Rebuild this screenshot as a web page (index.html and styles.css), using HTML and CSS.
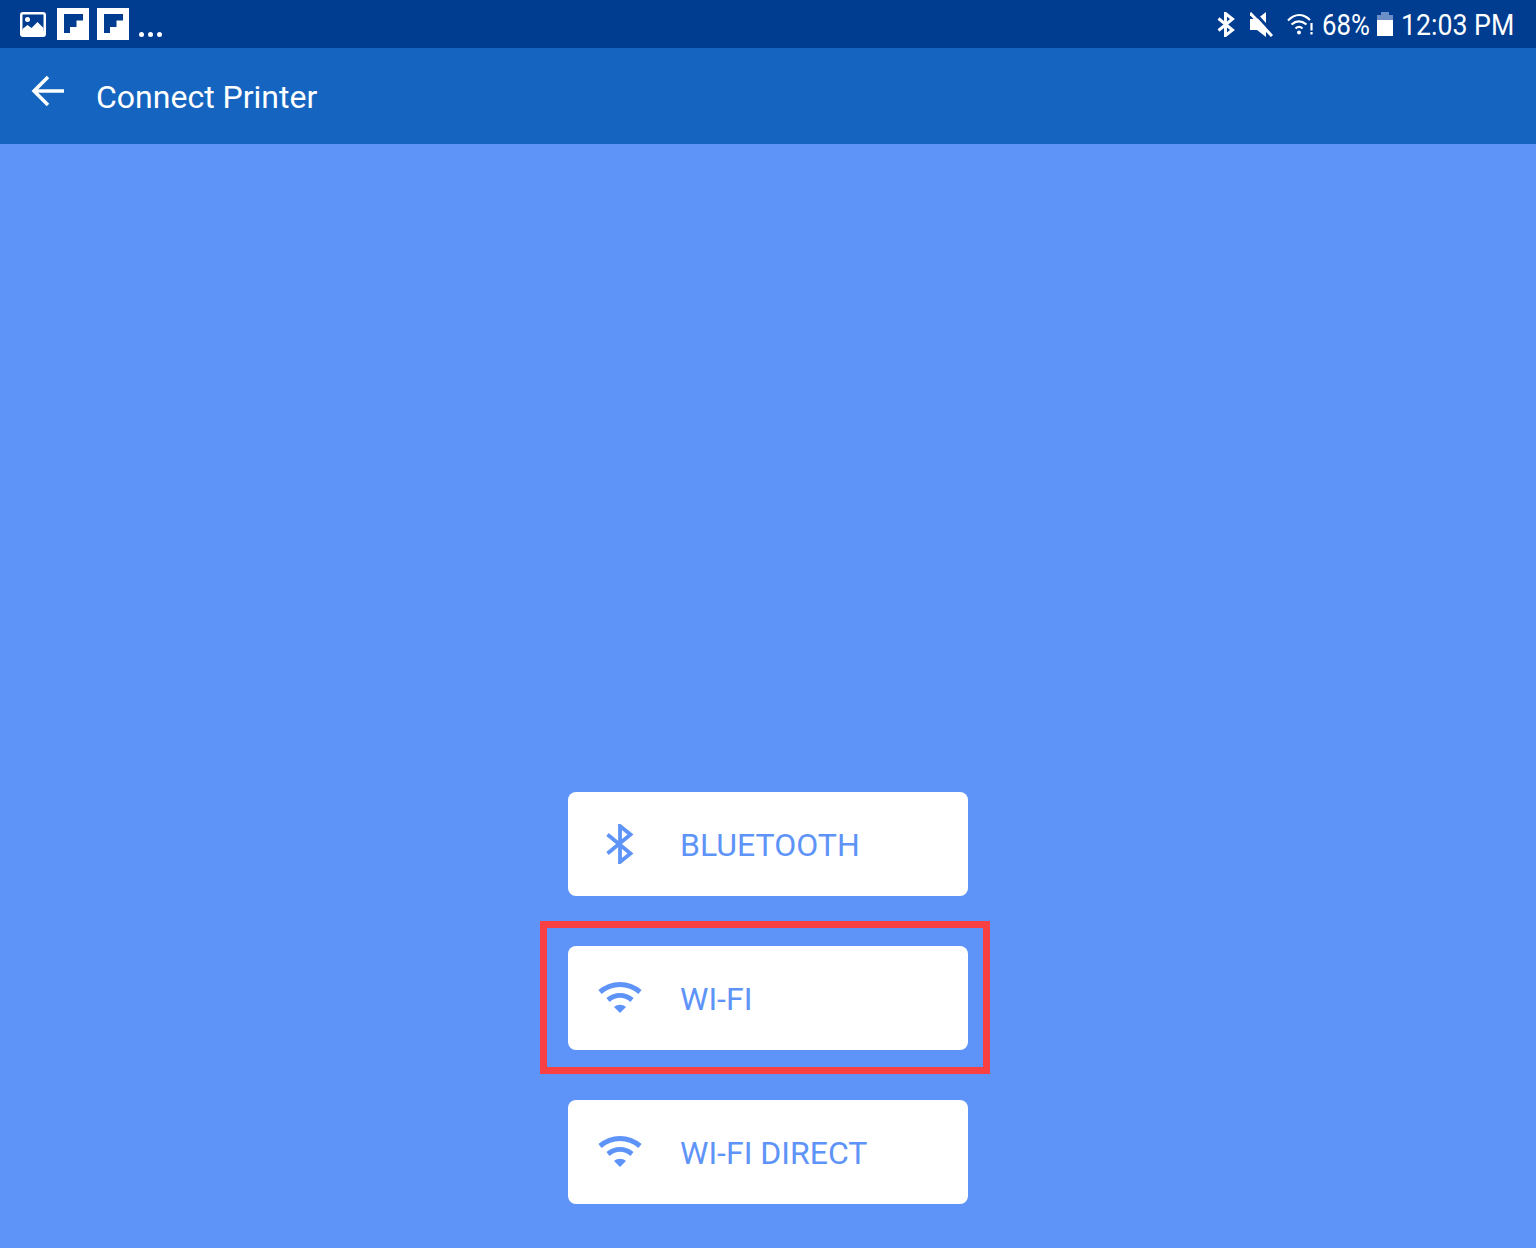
FILE: index.html
```html
<!DOCTYPE html>
<html lang="en">
<head>
    <meta charset="UTF-8">
    <meta name="viewport" content="width=device-width, initial-scale=1.0">
    <title>Connect Printer</title>
    <link rel="stylesheet" href="styles.css">
</head>
<body>
    <div class="status-bar">
        <div class="status-left">
            <svg class="icon-photo" width="26" height="25" viewBox="0 0 26 25"><rect width="26" height="25" rx="3" fill="#fff"/><rect x="2.500" y="2.500" width="21" height="16" fill="#003c8f"/><path d="M2.500 19v-2l5-4 4 3 6-6 6 6v3z" fill="#fff"/><circle cx="7.500" cy="7.500" r="2.500" fill="#fff"/></svg>
            <svg class="icon-app" width="32" height="32" viewBox="0 0 32 32"><rect width="32" height="32" fill="#fff"/><path d="M7 6h19v6.500h-6.500V19H13v6H7z" fill="#003c8f"/></svg>
            <svg class="icon-app" width="32" height="32" viewBox="0 0 32 32"><rect width="32" height="32" fill="#fff"/><path d="M7 6h19v6.500h-6.500V19H13v6H7z" fill="#003c8f"/></svg>
            <div class="dots"><span></span><span></span><span></span></div>
        </div>
        <div class="status-right">
            <svg class="icon-bt" width="18" height="25" viewBox="0 0 18 25" fill="none" stroke="#fff" stroke-width="3"><path d="M1.500 6.500l14 11.500L8.500 23.500V1.500L15.500 7 1.500 18.500"/></svg>
            <svg class="icon-mute" width="23" height="25" viewBox="0 0 23 25"><path d="M0 7h7l9-7v25l-9-7H0z" fill="#fff"/><path d="M4 0l19 21" stroke="#003c8f" stroke-width="3"/><path d="M0 1l22 23" stroke="#fff" stroke-width="3"/></svg>
            <svg class="icon-wifi-small" width="27" height="22" viewBox="0 0 27 22" fill="none" stroke="#fff" stroke-width="2.200"><path d="M1 7.500c7-7 15-7 22-.5"/><path d="M4.500 11.500c4.500-4 10-4 15 0"/><path d="M8.500 15.500c2.200-2 4.800-2 7 0"/><circle cx="12" cy="19.500" r="2" fill="#fff" stroke="none"/><path d="M24.500 10v7.500M24.500 19v2.500"/></svg>
            <span class="battery-text">68%</span>
            <div class="battery"><div class="battery-cap"></div><div class="battery-body"><div class="battery-fill"></div></div></div>
            <span class="clock">12:03 PM</span>
        </div>
    </div>

    <div class="app-bar">
        <svg class="icon-back" width="34" height="32" viewBox="0 0 34 32" fill="none" stroke="#fff" stroke-width="3.500"><path d="M33 16H3"/><path d="M17 2L3 16l14 14"/></svg>
        <h1>Connect Printer</h1>
    </div>

    <div class="content">
        <div class="connect-btn">
            <span class="btn-icon"><svg width="28" height="40" viewBox="0 0 28 40" fill="none" stroke="#5e93f7" stroke-width="3.800"><path d="M1.500 10.500l23 19L14 38V2l10.500 8.500-23 19"/></svg></span>
            <span class="btn-label">BLUETOOTH</span>
        </div>
        <div class="highlight">
            <div class="connect-btn">
                <span class="btn-icon"><svg width="44" height="32" viewBox="0 0 44 32" fill="none" stroke="#5e93f7" stroke-width="5"><path d="M2 10c12-10 28-10 40 0"/><path d="M10 18c7.500-6 16.500-6 24 0"/><path d="M16 25l6 6 6-6c-3.500-3-8.500-3-12 0z" fill="#5e93f7" stroke="none"/></svg></span>
                <span class="btn-label">WI-FI</span>
            </div>
        </div>
        <div class="connect-btn">
            <span class="btn-icon"><svg width="44" height="32" viewBox="0 0 44 32" fill="none" stroke="#5e93f7" stroke-width="5"><path d="M2 10c12-10 28-10 40 0"/><path d="M10 18c7.500-6 16.500-6 24 0"/><path d="M16 25l6 6 6-6c-3.500-3-8.500-3-12 0z" fill="#5e93f7" stroke="none"/></svg></span>
            <span class="btn-label">WI-FI DIRECT</span>
        </div>
    </div>
</body>
</html>
```
FILE: styles.css
```css
* {
    margin: 0;
    padding: 0;
    box-sizing: border-box;
}

body {
    font-family: Roboto, sans-serif;
    background: #5e93f7;
    height: 1248px;
    overflow: hidden;
}

.status-bar {
    height: 48px;
    background: #003c8f;
    color: white;
    display: flex;
    align-items: center;
    justify-content: space-between;
    padding: 0 22px 0 20px;
}

.status-left {
    display: flex;
    align-items: center;
}

.icon-photo {
    margin-right: 11px;
}

.icon-app {
    margin-right: 8px;
}

.dots {
    display: flex;
    gap: 4px;
    align-self: flex-end;
    margin: 0 0 3px 2px;
}

.dots span {
    width: 5px;
    height: 5px;
    border-radius: 50%;
    background: white;
}

.status-right {
    display: flex;
    align-items: center;
    font-size: 30px;
}

.icon-mute {
    margin-left: 15px;
}

.icon-wifi-small {
    margin-left: 14px;
}

/* the status bar font is narrower than Roboto, so the text gets squeezed */
.battery-text {
    width: 47px;
    margin-left: 8px;
    transform: scaleX(0.86);
    transform-origin: left center;
}

.battery {
    margin-left: 8px;
    width: 16px;
}

.battery-cap {
    width: 8px;
    height: 3px;
    margin: 0 auto;
    background: #6d8fc7;
}

.battery-body {
    height: 21px;
    padding-top: 5px;
    background: #6d8fc7;
}

.battery-fill {
    height: 100%;
    background: white;
}

.clock {
    width: 113px;
    margin-left: 8px;
    white-space: nowrap;
    transform: scaleX(0.89);
    transform-origin: left center;
}

.app-bar {
    height: 96px;
    background: #1565c0;
    color: white;
    display: flex;
    align-items: center;
    padding-left: 31px;
}

.icon-back {
    margin: 0 31px 10px 0;
}

.app-bar h1 {
    font-size: 32px;
    font-weight: 400;
    margin-top: 2px;
}

.content {
    height: 1104px;
    display: flex;
    flex-direction: column;
    align-items: center;
    padding-top: 648px;
}

.connect-btn {
    width: 400px;
    height: 104px;
    background: white;
    border-radius: 8px;
    display: flex;
    align-items: center;
}

.btn-icon {
    width: 112px;
    display: flex;
    justify-content: center;
    padding-right: 9px;
}

.btn-label {
    font-size: 32px;
    color: #5e93f7;
    margin-top: 2px;
}

.highlight {
    width: 450px;
    height: 153px;
    margin: 25px 0 26px -6px;
    padding: 18px 0 0 21px;
    border: 7px solid #f94144;
}
```
